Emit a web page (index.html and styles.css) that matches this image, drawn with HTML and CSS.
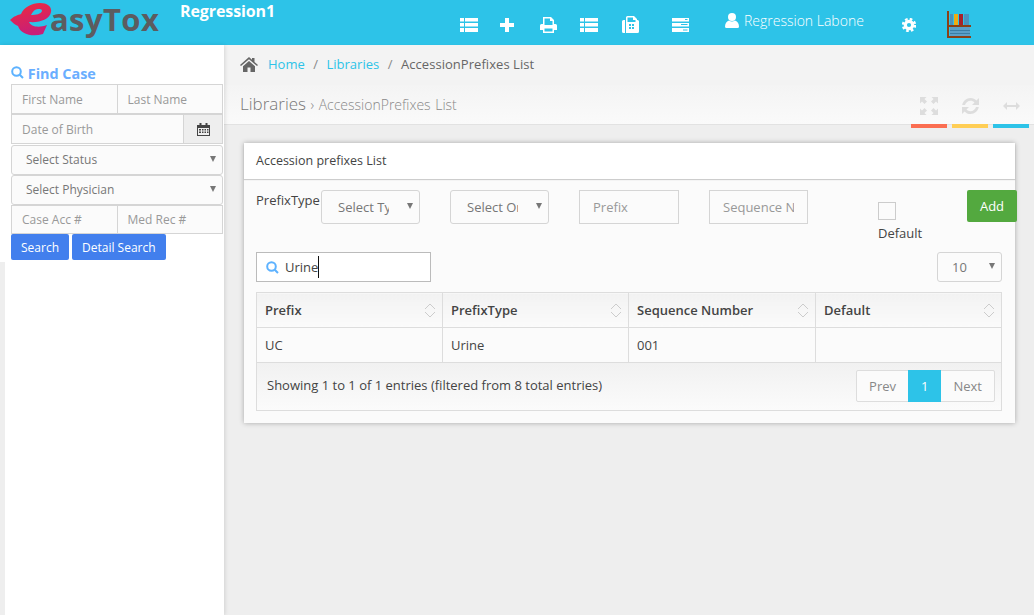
FILE: index.html
```html
<!DOCTYPE html>
<html lang="en">
<head>
    <meta charset="UTF-8">
    <title>AccessionPrefixes List</title>
    <link rel="stylesheet" href="styles.css">
</head>
<body>
<header class="topbar">
    <div class="logo">
        <svg class="logo-e" width="44" height="34" viewBox="0 0 44 34">
            <defs>
                <linearGradient id="logo-grad" x1="0" y1="0" x2="0.3" y2="1">
                    <stop offset="0" stop-color="#ee2c3c"/>
                    <stop offset="1" stop-color="#c81e78"/>
                </linearGradient>
            </defs>
            <path fill="url(#logo-grad)" d="M0 18 C4 14 8 13 11 12 C14 5 22 1 30 1 C38 1 42 5 41 10 C40 17 30 21 19 20 C21 25 29 26 37 23 L33 32 C23 35 11 33 8 24 C5 23 3 21 0 18 Z M21 13 C26 13 31 12 32 9 C32 7 30 7 28 7 C25 7 23 9 21 13 Z"/>
        </svg>
        <span class="logo-text">asyTox</span>
    </div>
    <div class="lab-name">Regression1</div>
    <nav class="topnav">
        <svg class="ico nav-list" width="18" height="14" viewBox="0 0 18 14"><path d="M0 0h4v3.600H0zM5 0h13v3.600H5zM0 5h4v3.600H0zM5 5h13v3.600H5zM0 10h4v4H0zM5 10h13v4H5z"/></svg>
        <svg class="ico nav-plus" width="14" height="14" viewBox="0 0 14 14"><path d="M5 0h4v5h5v4H9v5H5V9H0V5h5z"/></svg>
        <svg class="ico nav-print" width="17" height="16" viewBox="0 0 17 16"><path fill-rule="evenodd" d="M3 0h8l3 3v4h1.500A1.500 1.500 0 0 1 17 8.500V13h-3v3H3v-3H0V8.500A1.500 1.500 0 0 1 1.500 7H3zM4.500 1.500V8h8V4h-2.500V1.500zM4.500 11.500v3h8v-3z"/></svg>
        <svg class="ico nav-list2" width="18" height="14" viewBox="0 0 18 14"><path d="M0 0h4v3.600H0zM5 0h13v3.600H5zM0 5h4v3.600H0zM5 5h13v3.600H5zM0 10h4v4H0zM5 10h13v4H5z"/></svg>
        <svg class="ico nav-fax" width="17" height="17" viewBox="0 0 17 17"><path fill-rule="evenodd" d="M0 5.500Q0 4 1.500 4H3v13H1.500Q0 17 0 15.500zM4 1.500Q4 0 5.500 0H12l3 3v1h.500Q17 4 17 5.500v10Q17 17 15.500 17H4zM5.500 1.500V6h8V4H11V1.500zM7 8v2h2V8zM10 8v2h2V8zM7 11v2h2v-2zM10 11v2h2v-2z"/></svg>
        <svg class="ico nav-server" width="17" height="14" viewBox="0 0 17 14"><path fill-rule="evenodd" d="M0 0h17v3.500H0zM0 5h17v3.500H0zM0 10h17v4H0zM13 1v1h2.500V1zM9 6v1h6.500V6zM11 11.500v1h4.500v-1z"/></svg>
        <span class="user">
            <svg class="ico" width="14" height="15" viewBox="0 0 14 15"><circle cx="7" cy="4" r="4"/><path d="M0 13.500C0 10 2 8 4 7.500Q7 9.500 10 7.500C12 8 14 10 14 13.500Q14 15 12.500 15h-11Q0 15 0 13.500z"/></svg>
            <span>Regression Labone</span>
        </span>
        <svg class="nav-gear" width="14" height="14" viewBox="0 0 14 14">
            <circle class="gear-ring" cx="7" cy="7" r="3.700"/>
            <circle class="gear-teeth" cx="7" cy="7" r="6"/>
        </svg>
        <svg class="nav-books" width="24" height="28" viewBox="0 0 24 28">
            <rect x="0" y="0" width="2" height="27" fill="#8a4016"/>
            <rect x="3" y="3" width="3" height="11" fill="#4b93bd"/>
            <rect x="7" y="3" width="4" height="11" fill="#f0ac12"/>
            <rect x="12" y="3" width="4" height="11" fill="#a8222a"/>
            <rect x="17" y="3" width="5" height="11" fill="#4b93bd"/>
            <rect x="2" y="14" width="22" height="2" fill="#8a4016"/>
            <rect x="3" y="16" width="20" height="9" fill="#5ba0c8"/>
            <rect x="3" y="19" width="20" height="1" fill="#3a7ea6"/>
            <rect x="3" y="22" width="20" height="1" fill="#3a7ea6"/>
            <rect x="1" y="25" width="23" height="2" fill="#8a4016"/>
        </svg>
    </nav>
</header>
<div class="layout">
    <aside class="sidebar">
        <h4 class="find-title">
            <svg class="search-ico" width="13" height="13" viewBox="0 0 13 13"><circle cx="5.500" cy="5.500" r="4.300"/><path d="M8.700 8.700l3.300 3.300"/></svg>
            Find Case
        </h4>
        <form class="find-form">
            <div class="field-row">
                <input class="field" placeholder="First Name">
                <input class="field" placeholder="Last Name">
            </div>
            <div class="field-row">
                <input class="field" placeholder="Date of Birth">
                <span class="date-btn">
                    <svg width="13" height="13" viewBox="0 0 13 13"><path fill="#444" fill-rule="evenodd" d="M0 2h2.500V0h2v2h4V0h2v2H13v11H0zM1 5v7h11V5zM2 6h2v1.500H2zM5 6h1.500v1.500H5zM7.500 6H9v1.500H7.500zM10 6h1.500v1.500H10zM2 8.500h2V10H2zM5 8.500h1.500V10H5zM7.500 8.500H9V10H7.500zM10 8.500h1.500V10H10z"/></svg>
                </span>
            </div>
            <div class="select-wrap side-select"><select><option>Select Status</option></select></div>
            <div class="select-wrap side-select"><select><option>Select Physician</option></select></div>
            <div class="field-row">
                <input class="field" placeholder="Case Acc #">
                <input class="field" placeholder="Med Rec #">
            </div>
            <div class="side-buttons">
                <button type="button" class="btn-blue">Search</button>
                <button type="button" class="btn-blue">Detail Search</button>
            </div>
        </form>
        <div class="side-edge"></div>
    </aside>
    <main class="content">
        <div class="breadcrumb">
            <svg width="18" height="15" viewBox="0 0 18 15"><path fill="#666" d="M9 0l3 2.700V1h2.500v3.900L18 8l-1 1.100L9 2.200 1 9.100 0 8zM3 9.300L9 4l6 5.300V15h-4.500v-4.500h-3V15H3z"/></svg>
            <a class="crumb-link">Home</a>
            <span class="crumb-sep">/</span>
            <a class="crumb-link">Libraries</a>
            <span class="crumb-sep">/</span>
            <span class="crumb-current">AccessionPrefixes List</span>
        </div>
        <div class="page-head">
            <div class="page-title">Libraries <small>› AccessionPrefixes List</small></div>
            <div class="head-tools">
                <span class="tool tool-red">
                    <svg width="18" height="18" viewBox="0 0 18 18"><path fill="#ddd" d="M0 0h6.500L4.500 2l2.500 2.500L4.500 7 2 4.500 0 6.500zM18 0v6.500l-2-2L13.500 7 11 4.500 13.500 2l-2-2zM0 18v-6.500l2 2L4.500 11 7 13.500 4.500 16l2 2zM18 18h-6.500l2-2L11 13.500 13.500 11l2.500 2.500 2-2z"/></svg>
                </span>
                <span class="tool tool-yellow">
                    <svg width="17" height="18" viewBox="0 0 17 18"><path fill="#ddd" d="M8.500 1C11 1 13 2 14.400 3.600L17 1v7h-7l2.500-2.500C11.500 4.400 10 3.800 8.500 3.800 6 3.800 3.800 5.500 3 8H.2C1 4 4.400 1 8.500 1zM0 10h7l-2.500 2.500c1 1.100 2.500 1.700 4 1.700 2.500 0 4.700-1.700 5.500-4.200h2.800c-.8 4-4.200 7-8.300 7-2.500 0-4.500-1-5.900-2.600L0 17z"/></svg>
                </span>
                <span class="tool tool-blue">
                    <svg width="17" height="8" viewBox="0 0 17 8"><path fill="#ddd" d="M4 0v3h9V0l4 4-4 4V5H4v3L0 4z"/></svg>
                </span>
            </div>
        </div>
        <section class="card">
            <div class="card-title">Accession prefixes List</div>
            <div class="card-body">
                <div class="add-row">
                    <label class="type-label">PrefixType</label>
                    <div class="select-wrap add-select"><select><option>Select Type</option></select></div>
                    <div class="select-wrap add-select second"><select><option>Select Order</option></select></div>
                    <input class="add-input prefix" placeholder="Prefix">
                    <input class="add-input sequence" placeholder="Sequence Number">
                    <div class="default-box">
                        <span class="checkbox"></span>
                        <span>Default</span>
                    </div>
                    <button type="button" class="btn-add">Add</button>
                </div>
                <div class="filter-row">
                    <div class="search-box">
                        <svg class="search-ico" width="13" height="13" viewBox="0 0 13 13"><circle cx="5.500" cy="5.500" r="4.300"/><path d="M8.700 8.700l3.300 3.300"/></svg>
                        <span class="search-text">Urine</span>
                    </div>
                    <div class="select-wrap page-size"><select><option>10</option></select></div>
                </div>
                <table class="grid">
                    <thead>
                        <tr>
                            <th class="col-prefix">Prefix<svg class="sort" width="12" height="15" viewBox="0 0 12 15"><path d="M1 6l5-5 5 5M1 9l5 5 5-5"/></svg></th>
                            <th class="col-type">PrefixType<svg class="sort" width="12" height="15" viewBox="0 0 12 15"><path d="M1 6l5-5 5 5M1 9l5 5 5-5"/></svg></th>
                            <th class="col-seq">Sequence Number<svg class="sort" width="12" height="15" viewBox="0 0 12 15"><path d="M1 6l5-5 5 5M1 9l5 5 5-5"/></svg></th>
                            <th>Default<svg class="sort" width="12" height="15" viewBox="0 0 12 15"><path d="M1 6l5-5 5 5M1 9l5 5 5-5"/></svg></th>
                        </tr>
                    </thead>
                    <tbody>
                        <tr>
                            <td>UC</td>
                            <td>Urine</td>
                            <td>001</td>
                            <td></td>
                        </tr>
                    </tbody>
                </table>
                <div class="grid-foot">
                    <div class="grid-info">Showing 1 to 1 of 1 entries (filtered from 8 total entries)</div>
                    <div class="pager">
                        <span class="pager-item">Prev</span>
                        <span class="pager-item current">1</span>
                        <span class="pager-item">Next</span>
                    </div>
                </div>
            </div>
        </section>
    </main>
</div>
</body>
</html>
```

FILE: styles.css
```css
*{
    box-sizing:border-box;
}
html,body{
    height:100%;
}
body{
    margin:0;
    height:615px;
    overflow:hidden;
    display:flex;
    flex-direction:column;
    background:#eee;
    color:#444;
    font-family:"Open Sans",sans-serif;
    font-size:13px;
}
input,select,button{
    font-family:inherit;
}
input::placeholder{
    color:#999;
    opacity:1;
}

/* top bar */
.topbar{
    display:flex;
    flex:0 0 45px;
    height:45px;
    background:#2dc3e8;
    color:#fff;
}
.logo{
    display:flex;
    align-items:flex-start;
    width:180px;
    padding:2px 0 0 10px;
}
.logo-e{
    flex:none;
}
.logo-text{
    margin-left:-4px;
    color:#5c5c60;
    font-size:31px;
    font-weight:700;
    line-height:34px;
    letter-spacing:.4px;
}
.lab-name{
    width:245px;
    font-size:16px;
    font-weight:700;
    line-height:22px;
    letter-spacing:-.1px;
}
.topnav{
    display:flex;
    align-items:center;
}
.ico{
    flex:none;
    fill:#fff;
}
.nav-list{
    margin-left:35px;
    margin-top:4px;
}
.nav-plus{
    margin-left:22px;
    margin-top:4px;
}
.nav-print{
    margin-left:26px;
    margin-top:4px;
}
.nav-list2{
    margin-left:23px;
    margin-top:4px;
}
.nav-fax{
    margin-left:24px;
    margin-top:4px;
}
.nav-server{
    margin-left:33px;
    margin-top:4px;
}
.user{
    display:flex;
    align-items:center;
    gap:5px;
    width:177px;
    margin-left:36px;
    padding-bottom:5px;
    font-size:14px;
    font-weight:300;
}
.nav-gear{
    flex:none;
    margin-top:4px;
}
.gear-ring{
    fill:none;
    stroke:#fff;
    stroke-width:3.200;
}
.gear-teeth{
    fill:none;
    stroke:#fff;
    stroke-width:2.400;
    stroke-dasharray:2.600 2.112;
}
.nav-books{
    margin-left:31px;
    margin-top:4px;
}

.layout{
    display:flex;
    flex:1;
    min-height:0;
}

/* left search panel */
.sidebar{
    display:flex;
    flex-direction:column;
    flex:0 0 224px;
    width:224px;
    background:#fff;
    box-shadow:1px 0 4px rgba(0,0,0,.12);
    z-index:1;
}
.find-title{
    margin:19px 0 0 11px;
    height:20px;
    color:#6aaeff;
    font-size:14.400px;
    font-weight:700;
    line-height:19px;
}
.search-ico{
    fill:none;
    stroke:#5db2ff;
    stroke-width:2;
}
.find-form{
    width:212px;
    margin-left:11px;
}
.field-row{
    display:flex;
    height:30px;
}
.field-row:nth-child(5){
    height:29px;
}
.field{
    flex:1;
    width:0;
    height:100%;
    padding:0 10px;
    border:1px solid #d5d5d5;
    background:#fbfbfb;
    font-size:12px;
}
.field + .field{
    margin-left:-1px;
}
.date-btn{
    display:flex;
    flex:0 0 40px;
    align-items:center;
    justify-content:center;
    margin-left:-1px;
    border:1px solid #d5d5d5;
    background:#eee;
}
.select-wrap{
    position:relative;
}
.select-wrap select{
    display:block;
    width:100%;
    height:100%;
    appearance:none;
    border:1px solid #d5d5d5;
    border-radius:3px;
    background:#fbfbfb;
    color:#777;
    font-size:12px;
    outline:none;
}
.select-wrap::after{
    content:"";
    position:absolute;
    top:50%;
    right:7px;
    margin-top:-4px;
    border-style:solid;
    border-width:6px 3px 0;
    border-color:#777 transparent transparent;
}
.side-select{
    height:30px;
}
.side-select select{
    padding:0 0 2px 14px;
}
.find-form > .select-wrap:nth-child(3){
    margin-top:1px;
}
.side-buttons{
    display:flex;
    gap:3px;
}
.btn-blue{
    height:26px;
    padding:0 10px;
    border:0;
    border-radius:2px;
    background:#427fed;
    color:#fff;
    font-size:12px;
}
.side-edge{
    flex:1;
    width:5px;
    margin-top:2px;
    background:#eee;
}

/* main */
.content{
    flex:1;
    min-width:0;
}
.breadcrumb{
    display:flex;
    align-items:center;
    height:40px;
    padding:0 0 2px 16px;
    background:#f3f3f3;
    font-size:13px;
    box-shadow:0 1px 2px rgba(0,0,0,.15);
}
.crumb-link{
    margin-left:10px;
    color:#2dc3e8;
}
.crumb-link + .crumb-sep + .crumb-link{
    margin-left:0;
}
.crumb-sep{
    margin:0 8.500px;
    color:#888;
}
.crumb-current{
    color:#666;
    letter-spacing:.05px;
}
.page-head{
    position:relative;
    display:flex;
    justify-content:space-between;
    height:40px;
    padding:0 5px 0 16px;
    background:linear-gradient(#f4f4f4,#fafafa);
    border-bottom:1px solid #e2e2e2;
}
.page-title{
    padding-top:6px;
    color:#777;
    font-size:17px;
    font-weight:300;
    line-height:26px;
}
.page-title small{
    color:#888;
    font-size:14px;
    font-weight:300;
    word-spacing:1px;
}
.head-tools{
    display:flex;
    gap:5px;
}
.tool{
    display:flex;
    justify-content:center;
    align-items:center;
    width:36px;
    height:43px;
    padding-top:3px;
    border-bottom:4px solid;
}
.tool-red{
    border-color:#fb6e52;
}
.tool-yellow{
    border-color:#ffce55;
}
.tool-blue{
    border-color:#2dc3e8;
}

/* card */
.card{
    position:relative;
    width:771px;
    margin:18px 0 0 20px;
    box-shadow:0 0 5px rgba(0,0,0,.3);
    background:#fbfbfb;
}
.card-title{
    height:36px;
    padding-left:12px;
    background:#fff;
    color:#444;
    font-size:12.500px;
    line-height:35px;
    box-shadow:0 1px 1px rgba(0,0,0,.18);
}
.card-body{
    height:244px;
    padding:11px 13px 0 12px;
}
.add-row{
    display:flex;
    align-items:flex-start;
    height:62px;
}
.add-row > *{
    flex:none;
}
.type-label{
    width:65px;
    padding-top:1px;
    font-size:13px;
    line-height:18px;
}
.add-select{
    width:99px;
    height:34px;
}
.add-select select{
    padding:0 30px 0 16px;
    font-size:13px;
}
.add-select.second{
    margin-left:30px;
}
.add-input{
    height:34px;
    padding:0 13px;
    border:1px solid #d5d5d5;
    background:#fbfbfb;
    font-size:13px;
}
.prefix{
    width:100px;
    margin-left:30px;
}
.sequence{
    width:99px;
    margin-left:30px;
}
.default-box{
    display:flex;
    flex-direction:column;
    gap:4px;
    width:89px;
    margin-left:70px;
    padding-top:12px;
    font-size:13px;
    line-height:18px;
}
.checkbox{
    display:block;
    width:18px;
    height:18px;
    border:1px solid #ccc;
    background:#fbfbfb;
}
.btn-add{
    width:50px;
    height:32px;
    border:0;
    border-radius:2px;
    background:#53a93f;
    color:#fff;
    font-size:13px;
}
.filter-row{
    display:flex;
    justify-content:space-between;
    height:30px;
}
.search-box{
    display:flex;
    align-items:center;
    gap:6px;
    width:175px;
    padding-left:9px;
    border:1px solid #bbb;
    background:#fff;
    font-size:13px;
}
.search-text{
    border-right:1px solid #111;
    line-height:22px;
}
.page-size{
    width:65px;
}
.page-size select{
    padding-left:14px;
    font-size:13px;
}

/* table */
.grid{
    width:746px;
    margin-top:10px;
    border-collapse:collapse;
    table-layout:fixed;
}
.grid th,.grid td{
    height:35px;
    padding:0 8px;
    border:1px solid #ddd;
    font-size:13px;
    text-align:left;
}
.grid th{
    position:relative;
    background:linear-gradient(#f2f2f2,#fbfbfb);
    font-weight:600;
}
.col-prefix{
    width:186px;
}
.col-type{
    width:186px;
}
.col-seq{
    width:187px;
}
.sort{
    position:absolute;
    top:10px;
    right:6px;
    fill:none;
    stroke:#ccc;
    stroke-width:1;
}
.grid-foot{
    display:flex;
    justify-content:space-between;
    width:746px;
    height:48px;
    padding:7px 6px 0 10px;
    border:1px solid #ddd;
    border-top:0;
    background:linear-gradient(#f1f1f1,#fbfbfb);
}
.grid-info{
    padding-top:6px;
    font-size:13px;
    line-height:18px;
}
.pager{
    display:flex;
    height:32px;
    border:1px solid #ddd;
    border-radius:2px;
    background:#fbfbfb;
    color:#888;
    font-size:13px;
}
.pager-item{
    padding:0 12px;
    line-height:30px;
}
.pager-item.current{
    margin:-1px 0;
    padding:0 13px;
    background:#2dc3e8;
    color:#fff;
    line-height:32px;
}
```
